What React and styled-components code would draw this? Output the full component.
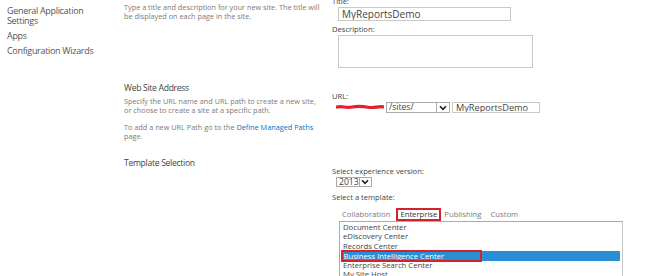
import React from "react";
import styled, { createGlobalStyle } from "styled-components";

const GlobalStyle = createGlobalStyle`
  html, body {
    margin: 0;
    padding: 0;
    background: #fff;
  }
  body {
    font-family: "Open Sans", "Noto Sans", sans-serif;
    color: #444;
    overflow: hidden;
  }
`;

const Page = styled.div`
  display: flex;
  width: 650px;
  height: 276px;
  overflow: hidden;
`;

const Nav = styled.nav`
  width: 124px;
  flex-shrink: 0;
  box-sizing: border-box;
  padding: 6px 0 0 7px;
`;

const NavItem = styled.div`
  font-size: 9px;
  line-height: 10px;
  letter-spacing: -0.035em;
  color: #555;
  margin-bottom: 5px;
`;

const Main = styled.div`
  flex: 1;
  display: flex;
  flex-direction: column;
`;

const Section = styled.section`
  display: grid;
  grid-template-columns: 208px 1fr;
  height: ${(p) => p.$h}px;
  flex-shrink: 0;
`;

const InfoCol = styled.div`
  padding-top: ${(p) => p.$top || 0}px;
`;

const FieldCol = styled.div`
  display: flex;
  flex-direction: column;
  align-items: flex-start;
  padding-top: ${(p) => p.$top || 0}px;
`;

const Heading = styled.div`
  font-size: 8.6px;
  line-height: 10px;
  letter-spacing: -0.035em;
  color: #444;
`;

const Help = styled.p`
  margin: ${(p) => p.$mt || 0}px 0 0;
  font-size: 7.3px;
  line-height: 9.4px;
  color: #7a7a7a;
  width: 196px;
`;

const Link = styled.a`
  color: #0072c6;
  text-decoration: none;
`;

const Label = styled.div`
  font-size: 7.6px;
  line-height: 9px;
  color: #444;
  margin-top: ${(p) => p.$mt || 0}px;
`;

const TextBox = styled.input`
  box-sizing: border-box;
  width: ${(p) => p.$w}px;
  height: ${(p) => p.$h || 14}px;
  margin: ${(p) => p.$m || "0"};
  padding: 0 3px;
  border: 1px solid #c9c9c9;
  font-family: inherit;
  font-size: ${(p) => p.$fs || 10}px;
  color: #444;
  background: #fff;
  outline: none;
`;

const TextArea = styled.textarea`
  box-sizing: border-box;
  width: 195px;
  height: 33px;
  margin: 1.5px 0 0 6px;
  border: 1px solid #c9c9c9;
  resize: none;
  outline: none;
`;

const UrlRow = styled.div`
  display: flex;
  align-items: center;
  gap: 2px;
  margin: 1.5px 0 0 4px;
`;

const Redaction = styled.svg`
  display: block;
  width: 48px;
  height: 11px;
`;

const Select = styled.div`
  box-sizing: border-box;
  display: flex;
  align-items: stretch;
  width: ${(p) => p.$w}px;
  height: ${(p) => p.$h || 11}px;
  margin: ${(p) => p.$m || "0"};
  border: 1px solid #ababab;
  background: #fff;
`;

const SelectText = styled.span`
  flex: 1;
  padding-left: 2px;
  font-size: 8.6px;
  line-height: ${(p) => p.$lh || 9}px;
  color: #444;
`;

const ArrowBox = styled.span`
  width: 12px;
  border-left: 1px solid #ababab;
  display: flex;
  align-items: center;
  justify-content: center;
`;

const Tabs = styled.div`
  display: flex;
  align-items: center;
  gap: 3px;
  margin: 6px 0 0 7px;
  height: 13px;
`;

const Tab = styled.span`
  box-sizing: border-box;
  height: 13px;
  padding: ${(p) => (p.$active ? "0 2px" : "0 3px")};
  margin-right: ${(p) => (p.$active ? -3 : 0)}px;
  border: ${(p) => (p.$active ? "2px solid #d1232a" : "none")};
  font-size: 7.7px;
  line-height: ${(p) => (p.$active ? 9 : 13)}px;
  color: ${(p) => (p.$active ? "#333" : "#7a7a7a")};
`;

const ListBox = styled.div`
  box-sizing: border-box;
  width: 284px;
  height: 60px;
  margin-left: 7px;
  padding: 1px 2px 0 1px;
  border: 1px solid #a9a9a9;
  border-right-color: #c8c8c8;
  overflow: hidden;
`;

const Option = styled.div`
  height: 9.5px;
  line-height: 9.5px;
  padding-left: 2px;
  font-size: 7.7px;
  white-space: nowrap;
  color: ${(p) => (p.$selected ? "#fff" : "#444")};
  background: ${(p) => (p.$selected ? "#2a8ed6" : "transparent")};
`;

const Marked = styled.span`
  display: inline-block;
  vertical-align: top;
  box-sizing: border-box;
  width: 137px;
  height: 8px;
  line-height: 8px;
  margin-top: 0.75px;
  padding-left: 0.5px;
  outline: 2px solid #d1232a;
`;

const Chevron = () => (
  <svg width="8" height="6" viewBox="0 0 8 6">
    <path d="M1 1.2 L4 4.4 L7 1.2" fill="none" stroke="#222" strokeWidth="1.6" />
  </svg>
);

const templates = [
  "Document Center",
  "eDiscovery Center",
  "Records Center",
  "Business Intelligence Center",
  "Enterprise Search Center",
  "My Site Host",
];

export default function App() {
  return (
    <>
      <GlobalStyle />
      <Page>
        <Nav>
          <NavItem>
            General Application
            <br />
            Settings
          </NavItem>
          <NavItem>Apps</NavItem>
          <NavItem>Configuration Wizards</NavItem>
        </Nav>
        <Main>
          <Section $h={82}>
            <InfoCol $top={2.5}>
              <Help>
                Type a title and description for your new site. The title will
                be displayed on each page in the site.
              </Help>
            </InfoCol>
            <FieldCol>
              <Label $mt={-3.5}>Title:</Label>
              <TextBox $w={173} $h={14} $fs={10} $m="1.5px 0 0 6px" readOnly defaultValue="MyReportsDemo" />
              <Label $mt={3.5}>Description:</Label>
              <TextArea readOnly />
            </FieldCol>
          </Section>

          <Section $h={73}>
            <InfoCol $top={1}>
              <Heading>Web Site Address</Heading>
              <Help $mt={3.5}>
                Specify the URL name and URL path to create a new site, or
                choose to create a site at a specific path.
              </Help>
              <Help $mt={7.5}>
                To add a new URL Path go to the <Link href="#">Define Managed Paths</Link>{" "}
                page.
              </Help>
            </InfoCol>
            <FieldCol $top={9.5}>
              <Label>URL:</Label>
              <UrlRow>
                <Redaction viewBox="0 0 48 11">
                  <path
                    d="M1 5 C6 3.8 10 6.2 16 5 S26 4 32 5.2 S42 4.2 47 4.8"
                    fill="none"
                    stroke="#e3202b"
                    strokeWidth="3.2"
                    strokeLinecap="round"
                  />
                </Redaction>
                <Select $w={64}>
                  <SelectText>/sites/</SelectText>
                  <ArrowBox>
                    <Chevron />
                  </ArrowBox>
                </Select>
                <TextBox $w={88} $h={11} $fs={9.2} readOnly defaultValue="MyReportsDemo" />
              </UrlRow>
            </FieldCol>
          </Section>

          <Section $h={130}>
            <InfoCol $top={3}>
              <Heading>Template Selection</Heading>
            </InfoCol>
            <FieldCol $top={11.5}>
              <Label>Select experience version:</Label>
              <Select $w={36} $h={10} $m="1.5px 0 0 4px">
                <SelectText $lh={8}>2013</SelectText>
                <ArrowBox>
                  <Chevron />
                </ArrowBox>
              </Select>
              <Label $mt={5.5}>Select a template:</Label>
              <Tabs>
                <Tab>Collaboration</Tab>
                <Tab $active>Enterprise</Tab>
                <Tab>Publishing</Tab>
                <Tab>Custom</Tab>
              </Tabs>
              <ListBox>
                {templates.map((t) => (
                  <Option key={t} $selected={t === "Business Intelligence Center"}>
                    {t === "Business Intelligence Center" ? <Marked>{t}</Marked> : t}
                  </Option>
                ))}
              </ListBox>
            </FieldCol>
          </Section>
        </Main>
      </Page>
    </>
  );
}
